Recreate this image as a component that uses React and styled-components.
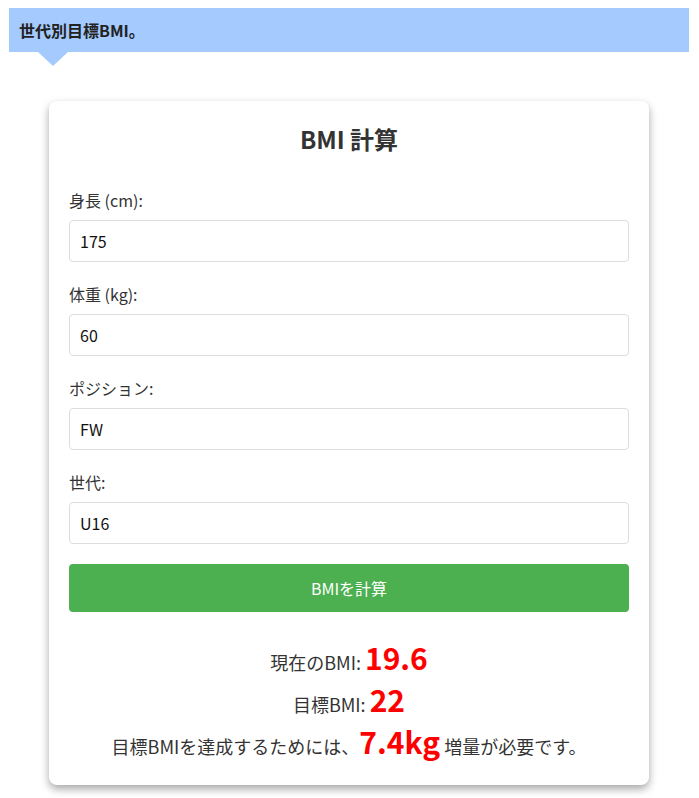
import React, { useState } from 'react'
import styled, { createGlobalStyle } from 'styled-components'

const GlobalStyle = createGlobalStyle`
  html, body {
    margin: 0;
    padding: 0;
    background: #fff;
  }
  body {
    font-family: "Noto Sans CJK JP", "Noto Sans", sans-serif;
    color: #333;
  }
`

function App() {
    const [height, setHeight] = useState('175')
    const [weight, setWeight] = useState('60')
    const [position, setPosition] = useState('FW')
    const [generation, setGeneration] = useState('U16')

    const h = parseFloat(height) / 100
    const bmi = (parseFloat(weight) / (h * h)).toFixed(1)
    const target = 22
    const gain = (target * h * h - parseFloat(weight)).toFixed(1)

    return (
        <Page>
            <GlobalStyle />
            <Heading>世代別目標BMI。</Heading>
            <Card>
                <Title>BMI 計算</Title>
                <Field>
                    <Label>身長 (cm):</Label>
                    <Input value={height} onChange={e => setHeight(e.target.value)} />
                </Field>
                <Field>
                    <Label>体重 (kg):</Label>
                    <Input value={weight} onChange={e => setWeight(e.target.value)} />
                </Field>
                <Field>
                    <Label>ポジション:</Label>
                    <Input value={position} onChange={e => setPosition(e.target.value)} />
                </Field>
                <Field>
                    <Label>世代:</Label>
                    <Input value={generation} onChange={e => setGeneration(e.target.value)} />
                </Field>
                <Button type="button">BMIを計算</Button>
                <Results>
                    <Line>現在のBMI: <Big>{bmi}</Big></Line>
                    <Line>目標BMI: <Big>{target}</Big></Line>
                    <Line>目標BMIを達成するためには、<Big>{gain}kg</Big> 増量が必要です。</Line>
                </Results>
            </Card>
        </Page>
    )
}

export default App

const Page = styled.div`
  padding: 8px 10px 12px 9px;
`

const Heading = styled.h3`
  position: relative;
  margin: 0 0 49px;
  height: 44px;
  padding: 0 10px;
  display: flex;
  align-items: center;
  background: #a4cafe;
  color: #222;
  font-size: 16px;
  font-weight: 700;

  &::after {
    content: '';
    position: absolute;
    left: 29px;
    top: 100%;
    border-left: 15px solid transparent;
    border-right: 15px solid transparent;
    border-top: 14px solid #a4cafe;
  }
`

const Card = styled.div`
  width: 600px;
  box-sizing: border-box;
  margin: 0 auto;
  padding: 20px 20px 17px;
  background: #fff;
  border-radius: 8px;
  box-shadow: 0 4px 8px rgba(0, 0, 0, 0.35);
`

const Title = styled.h2`
  margin: 0 0 31px;
  text-align: center;
  font-size: 24px;
  line-height: 36px;
  font-weight: 700;
  color: #333;
`

const Field = styled.div`
  display: flex;
  flex-direction: column;
  margin-bottom: 20px;
`

const Label = styled.label`
  font-size: 16px;
  line-height: 24px;
  margin-bottom: 8px;
  color: #333;
`

const Input = styled.input`
  height: 42px;
  box-sizing: border-box;
  padding: 0 10px;
  border: 1px solid #ddd;
  border-radius: 4px;
  font-family: inherit;
  font-size: 16px;
  color: #111;
  outline: none;
`

const Button = styled.button`
  width: 100%;
  height: 48px;
  border: none;
  border-radius: 4px;
  background: #4caf50;
  color: #fff;
  font-family: inherit;
  font-size: 16px;
  cursor: pointer;
`

const Results = styled.div`
  margin-top: 30px;
  text-align: center;
`

const Line = styled.p`
  margin: 2px 0;
  height: 40px;
  line-height: 40px;
  font-size: 18px;
  color: #333;
`

const Big = styled.span`
  color: #ff0000;
  font-size: 30px;
  font-weight: 700;
  line-height: 1;
`
